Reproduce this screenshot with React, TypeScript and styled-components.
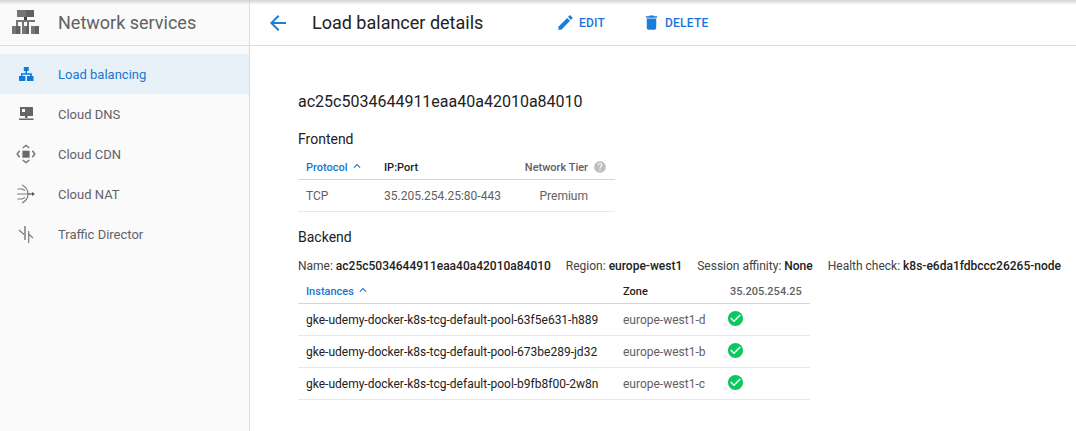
import React from "react";
import styled, { createGlobalStyle } from "styled-components";

const Global = createGlobalStyle`
  html, body { margin: 0; padding: 0; background: #fff; }
  body { font-family: Roboto, "Liberation Sans", sans-serif; color: #212121; }
  #root { width: 1076px; height: 431px; overflow: hidden; }
`;

const Page = styled.div`
  position: relative;
  display: flex;
  width: 1076px;
  height: 431px;
  overflow: hidden;
  &::before {
    content: "";
    position: absolute;
    top: 0;
    left: 0;
    right: 0;
    height: 5px;
    background: linear-gradient(#d4d4d4, rgba(255, 255, 255, 0));
    z-index: 2;
  }
`;

const Sidebar = styled.aside`
  flex: 0 0 250px;
  box-sizing: border-box;
  background: #fafafa;
  border-right: 1px solid #dcdcdc;
`;

const SideHeader = styled.div`
  display: flex;
  align-items: center;
  height: 46px;
  box-sizing: border-box;
  padding-left: 12px;
  border-bottom: 1px solid #dcdcdc;
`;

const LogoWrap = styled.span`
  display: flex;
  width: 27px;
  height: 24px;
  margin-top: -1px;
`;

const SideTitle = styled.span`
  margin-left: 19px;
  font-size: 18px;
  color: #616161;
`;

const NavList = styled.nav`
  display: flex;
  flex-direction: column;
  padding-top: 8px;
`;

const NavRow = styled.div<{ $active?: boolean }>`
  display: flex;
  align-items: center;
  height: 40px;
  padding-left: 16px;
  font-size: 13px;
  color: ${(p) => (p.$active ? "#1976d2" : "#5f6368")};
  background: ${(p) => (p.$active ? "#e8f0f8" : "transparent")};
`;

const NavIcon = styled.svg`
  flex: none;
  width: 20px;
  height: 20px;
  margin-right: 22px;
`;

const Main = styled.main`
  flex: 1;
  min-width: 0;
`;

const TopBar = styled.header`
  display: flex;
  align-items: center;
  height: 46px;
  box-sizing: border-box;
  padding-left: 16px;
  border-bottom: 1px solid #dcdcdc;
`;

const BackIcon = styled.svg`
  flex: none;
  width: 24px;
  height: 24px;
  fill: #1a7fdc;
`;

const PageTitle = styled.h1`
  margin: 0 0 0 22px;
  width: 243px;
  font-size: 18px;
  font-weight: 400;
  color: #212121;
`;

const ActionButton = styled.button<{ $w: number }>`
  display: flex;
  align-items: center;
  width: ${(p) => p.$w}px;
  padding: 0;
  border: 0;
  background: none;
  font-family: inherit;
  font-size: 12px;
  font-weight: 500;
  letter-spacing: 0.25px;
  color: #1a73d8;
`;

const ActionIcon = styled.svg`
  flex: none;
  width: 19px;
  height: 19px;
  margin: 0 4px 0 1px;
  fill: #1a7fdc;
`;

const Content = styled.div`
  padding: 46px 0 0 48px;
`;

const LbName = styled.div`
  font-size: 16px;
  line-height: 20px;
  color: #212121;
`;

const SectionTitle = styled.h2<{ $top: number }>`
  margin: ${(p) => p.$top}px 0 0;
  font-size: 14px;
  line-height: 18px;
  font-weight: 400;
  color: #212121;
`;

const Table = styled.table<{ $w: number }>`
  table-layout: fixed;
  border-collapse: collapse;
  width: ${(p) => p.$w}px;
`;

const Th = styled.th<{ $blue?: boolean; $muted?: boolean; $right?: boolean }>`
  height: 24px;
  padding: ${(p) => (p.$right ? "1px 8px 0 0" : "1px 0 0 8px")};
  box-sizing: border-box;
  border-bottom: 1px solid #d6d6d6;
  font-size: 11px;
  line-height: 14px;
  font-weight: 500;
  text-align: ${(p) => (p.$right ? "right" : "left")};
  white-space: nowrap;
  color: ${(p) => (p.$blue ? "#1976d2" : p.$muted ? "#616161" : "#212121")};
`;

const FrontTh = styled(Th)`
  padding-top: 3px;
`;

const Td = styled.td<{ $muted?: boolean; $right?: boolean }>`
  height: 32px;
  padding: ${(p) => (p.$right ? "0 27px 0 0" : "0 0 0 8px")};
  box-sizing: border-box;
  border-bottom: 1px solid #e8e8e8;
  font-size: 12px;
  white-space: nowrap;
  text-align: ${(p) => (p.$right ? "right" : "left")};
  color: ${(p) => (p.$muted ? "#616161" : "#212121")};
`;

const FrontCell = styled(Td)`
  padding-top: 2px;
`;

const SortIcon = styled.svg`
  width: 14px;
  height: 14px;
  margin: -2px 0 0 2px;
  vertical-align: -2px;
  fill: #1976d2;
`;

const HelpIcon = styled.svg`
  width: 14px;
  height: 14px;
  margin: -2px 0 0 5px;
  vertical-align: -3px;
  fill: #bdbdbd;
`;

const OkIcon = styled.svg`
  display: block;
  width: 15px;
  height: 15px;
  margin: -2px 0 0 -2px;
  fill: #0cc95f;
`;

const InfoLine = styled.div`
  display: flex;
  gap: 15px;
  margin-top: 13px;
  font-size: 12px;
  line-height: 14px;
  white-space: nowrap;
  color: #424242;
  b {
    font-weight: 500;
    color: #212121;
  }
`;

const BackendTable = styled(Table)`
  margin-top: 7px;
`;

const FrontendTable = styled(Table)`
  margin-top: 7px;
`;

const Logo = () => (
  <LogoWrap>
    <svg width="27" height="24" viewBox="0 0 27 24">
      <path fill="#757575" d="M5 0h9v7H5zM0 16h4v8H0zM10 16h4v8h-4zM19 16h4v8h-4z" />
      <path fill="#616161" d="M14 0h8v7h-8zM4 16h4.500v8H4zM14 16h3v8h-3zM23 16h4v8h-4z" />
      <path fill="#424242" d="M12 7h3v3h-3z" />
      <path fill="#757575" d="M4 10h19v2h-6v4h-2v-4h-3v4h-2v-4H6v4H4z" />
    </svg>
  </LogoWrap>
);

const items = [
  {
    label: "Load balancing",
    active: true,
    icon: (
      <path
        fill="#0b7be0"
        d="M7.800 3h4.900v4h-1.700v2.200h4.800V12h1.700v5H11v-5h3.100v-1.300H6.400V12h3v5H3v-5h2V9.200h4.500V7H7.800z"
      />
    ),
  },
  {
    label: "Cloud DNS",
    icon: <path fill="#666" fillRule="evenodd" d="M4 3h13v9h-5.500v2h-2.500v-2H4zM6 5v3h3V5zM3 14.500h14.500V16H3z" />,
  },
  {
    label: "Cloud CDN",
    icon: (
      <g>
        <path fill="#6a6a6a" d="M6.400 6.700h7.200v7H6.400z" />
        <path
          fill="none"
          stroke="#777"
          strokeWidth="1.500"
          d="M6.700 4l3.300-2.500L13.300 4M6.700 16l3.300 2.600 3.300-2.600M3.600 6.700L1.200 10l2.400 3.300M16.400 6.700l2.400 3.300-2.400 3.300"
        />
      </g>
    ),
  },
  {
    label: "Cloud NAT",
    icon: (
      <g fill="none" stroke="#7a7a7a" strokeWidth="1.200">
        <path d="M6 1c4 2 6 5.500 6 9s-2 7-6 9" />
        <path d="M1.500 5h4.500l3 1.500M1 10h11M1.500 15h4.500l3-1.500" />
        <path stroke="#555" d="M12 10h5" />
        <path fill="#555" stroke="none" d="M16 8l3 2-3 2z" />
      </g>
    ),
  },
  {
    label: "Traffic Director",
    icon: (
      <g fill="none" stroke="#7c7c7c" strokeWidth="1.200">
        <path d="M3 6l5 4.500" />
        <path strokeWidth="1.500" d="M9 2v14" />
        <path d="M12.700 7v12M12.700 10l4.300 4" />
      </g>
    ),
  },
];

const instances = [
  ["gke-udemy-docker-k8s-tcg-default-pool-63f5e631-h889", "europe-west1-d"],
  ["gke-udemy-docker-k8s-tcg-default-pool-673be289-jd32", "europe-west1-b"],
  ["gke-udemy-docker-k8s-tcg-default-pool-b9fb8f00-2w8n", "europe-west1-c"],
];

const UP = "M7.410 15.410L12 10.830l4.590 4.580L18 14l-6-6-6 6z";

export default function App() {
  return (
    <Page>
      <Global />
      <Sidebar>
        <SideHeader>
          <Logo />
          <SideTitle>Network services</SideTitle>
        </SideHeader>
        <NavList>
          {items.map((it) => (
            <NavRow key={it.label} $active={it.active}>
              <NavIcon viewBox="0 0 20 20">{it.icon}</NavIcon>
              {it.label}
            </NavRow>
          ))}
        </NavList>
      </Sidebar>
      <Main>
        <TopBar>
          <BackIcon viewBox="0 0 24 24">
            <path d="M20 11H7.830l5.590-5.590L12 4l-8 8 8 8 1.410-1.410L7.830 13H20v-2z" />
          </BackIcon>
          <PageTitle>Load balancer details</PageTitle>
          <ActionButton $w={86}>
            <ActionIcon viewBox="0 0 24 24">
              <path d="M3 17.250V21h3.750L17.810 9.940l-3.750-3.750L3 17.250zM20.710 7.040c.39-.39.39-1.020 0-1.410l-2.340-2.340c-.39-.39-1.020-.39-1.410 0l-1.830 1.830 3.750 3.750 1.830-1.830z" />
            </ActionIcon>
            EDIT
          </ActionButton>
          <ActionButton $w={80}>
            <ActionIcon viewBox="0 0 24 24">
              <path d="M6 19c0 1.100.9 2 2 2h8c1.100 0 2-.9 2-2V7H6v12zM19 4h-3.500l-1-1h-5l-1 1H5v2h14V4z" />
            </ActionIcon>
            DELETE
          </ActionButton>
        </TopBar>
        <Content>
          <LbName>ac25c5034644911eaa40a42010a84010</LbName>
          <SectionTitle $top={18}>Frontend</SectionTitle>
          <FrontendTable $w={317}>
            <colgroup>
              <col width="78" />
              <col width="130" />
              <col width="109" />
            </colgroup>
            <thead>
              <tr>
                <FrontTh $blue>
                  Protocol
                  <SortIcon viewBox="0 0 24 24"><path d={UP} /></SortIcon>
                </FrontTh>
                <FrontTh>IP:Port</FrontTh>
                <FrontTh $muted $right>
                  Network Tier
                  <HelpIcon viewBox="0 0 24 24">
                    <path d="M12 2C6.480 2 2 6.480 2 12s4.480 10 10 10 10-4.480 10-10S17.520 2 12 2zm1 17h-2v-2h2v2zm2.070-7.750l-.9.920C13.450 12.900 13 13.500 13 15h-2v-.5c0-1.100.45-2.100 1.170-2.830l1.240-1.260c.37-.36.59-.86.59-1.410 0-1.100-.9-2-2-2s-2 .9-2 2H8c0-2.210 1.790-4 4-4s4 1.790 4 4c0 .88-.36 1.680-.93 2.250z" />
                  </HelpIcon>
                </FrontTh>
              </tr>
            </thead>
            <tbody>
              <tr>
                <FrontCell $muted>TCP</FrontCell>
                <FrontCell $muted>35.205.254.25:80-443</FrontCell>
                <FrontCell $muted $right>Premium</FrontCell>
              </tr>
            </tbody>
          </FrontendTable>
          <SectionTitle $top={16}>Backend</SectionTitle>
          <InfoLine>
            <span>Name: <b>ac25c5034644911eaa40a42010a84010</b></span>
            <span>Region: <b>europe-west1</b></span>
            <span>Session affinity: <b>None</b></span>
            <span>Health check: <b>k8s-e6da1fdbccc26265-node</b></span>
          </InfoLine>
          <BackendTable $w={512}>
            <colgroup>
              <col width="317" />
              <col width="107" />
              <col width="88" />
            </colgroup>
            <thead>
              <tr>
                <Th $blue>
                  Instances
                  <SortIcon viewBox="0 0 24 24"><path d={UP} /></SortIcon>
                </Th>
                <Th>Zone</Th>
                <Th $muted>35.205.254.25</Th>
              </tr>
            </thead>
            <tbody>
              {instances.map(([name, zone]) => (
                <tr key={name}>
                  <Td>{name}</Td>
                  <Td $muted>{zone}</Td>
                  <Td>
                    <OkIcon viewBox="2 2 20 20">
                      <path d="M12 2C6.480 2 2 6.480 2 12s4.480 10 10 10 10-4.480 10-10S17.520 2 12 2zm-2 15l-5-5 1.410-1.410L10 14.170l7.590-7.590L19 8l-9 9z" />
                    </OkIcon>
                  </Td>
                </tr>
              ))}
            </tbody>
          </BackendTable>
        </Content>
      </Main>
    </Page>
  );
}
